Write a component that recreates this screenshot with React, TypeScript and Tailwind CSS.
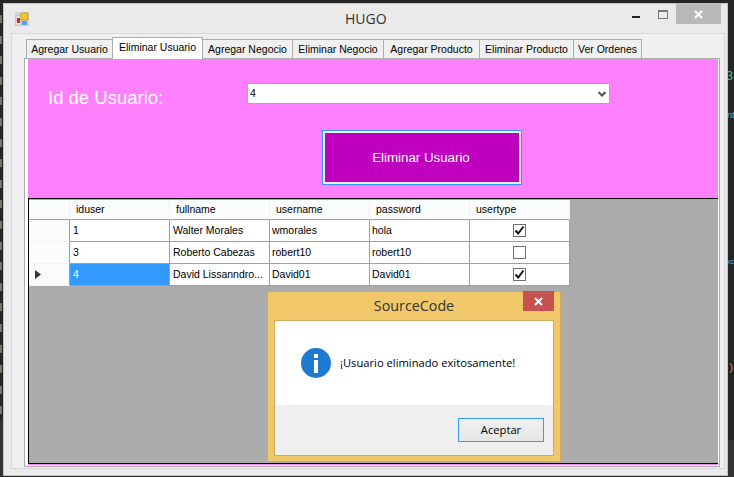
import clsx from "clsx";

const SEGOE = "font-['Open_Sans',sans-serif]";

const TABS = [
  { label: "Agregar Usuario", width: "w-[87px]" },
  { label: "Eliminar Usuario", width: "w-[91px]", active: true },
  { label: "Agregar Negocio", width: "w-[91px]" },
  { label: "Eliminar Negocio", width: "w-[92px]" },
  { label: "Agregar Producto", width: "w-[97px]" },
  { label: "Eliminar Producto", width: "w-[95px]" },
  { label: "Ver Ordenes", width: "w-[69px]" }
];

const COLUMNS = ["iduser", "fullname", "username", "password", "usertype"];

const ROWS = [
  { id: "1", name: "Walter Morales", user: "wmorales", pass: "hola", type: true },
  { id: "3", name: "Roberto Cabezas", user: "robert10", pass: "robert10", type: false },
  { id: "4", name: "David Lissanndro...", user: "David01", pass: "David01", type: true, current: true }
];

const EDITOR_MARKS = Array.from({ length: 20 }, (_, i) => i);

function AppIcon() {
  return (
    <svg width="14" height="14" viewBox="0 0 14 14" className="shrink-0">
      <rect x="0" y="0" width="14" height="14" fill="#d4d4d4" />
      <rect x="1" y="4" width="5" height="9" fill="#f2f2f2" stroke="#999" strokeWidth="0.5" />
      <rect x="2" y="6" width="3" height="5" fill="#c8281e" />
      <rect x="6" y="1" width="7" height="7" fill="#f7c81e" stroke="#a88a20" strokeWidth="0.7" />
      <rect x="7" y="9" width="5" height="4" fill="#5b9ee8" />
    </svg>
  );
}

function Checkbox({ checked }: { checked: boolean }) {
  return (
    <div className="flex h-[13px] w-[13px] items-center justify-center border border-[#707070] bg-white">
      {checked && (
        <svg width="11" height="11" viewBox="0 0 11 11">
          <path d="M1.5 5.5 L4.2 8.5 L9.5 1.5" fill="none" stroke="#111" strokeWidth="2" />
        </svg>
      )}
    </div>
  );
}

function DataGrid() {
  return (
    <div className="grid w-[541px] grid-cols-[41px_100px_100px_100px_100px_100px] bg-white text-[10.5px] text-black">
      <div className="h-[20px] border-r border-b border-r-[#f0f2f7] border-b-[#a0a0a0] bg-[#fafbfd]" />
      {COLUMNS.map((col) => (
        <div
          key={col}
          className="flex h-[20px] items-center border-r border-b border-r-[#f0f2f7] border-b-[#a0a0a0] bg-[#fafbfd] pl-[6px] leading-none"
        >
          {col}
        </div>
      ))}
      {ROWS.map((row) => (
        <div key={row.id} className="contents">
          <div className="flex h-[22px] items-center justify-end border-r border-b border-r-[#a0a0a0] border-b-[#f0f2f7] bg-[#fafbfd] pr-[28px]">
            {row.current && (
              <svg width="6" height="9" viewBox="0 0 6 9">
                <path d="M0 0 L6 4.5 L0 9 Z" fill="#333" />
              </svg>
            )}
          </div>
          <div
            className={clsx(
              "flex h-[22px] items-center border-r border-b border-[#a0a0a0] pl-[3px]",
              row.current && "bg-[#3399ff] text-white"
            )}
          >
            {row.id}
          </div>
          <div className="flex h-[22px] items-center overflow-hidden border-r border-b border-[#a0a0a0] pl-[3px] whitespace-nowrap">
            {row.name}
          </div>
          <div className="flex h-[22px] items-center border-r border-b border-[#a0a0a0] pl-[2px]">{row.user}</div>
          <div className="flex h-[22px] items-center border-r border-b border-[#a0a0a0] pl-[2px]">{row.pass}</div>
          <div className="flex h-[22px] items-center justify-center border-r border-b border-[#a0a0a0]">
            <Checkbox checked={row.type} />
          </div>
        </div>
      ))}
    </div>
  );
}

function MessageBox() {
  return (
    <div className="absolute top-[291px] left-[267px] flex h-[171px] w-[294px] flex-col border border-[#d2aa55] bg-[#f0c869] px-[6px] pb-[5px]">
      <div className="relative flex h-[28px] shrink-0 items-center justify-center">
        <span className={clsx(SEGOE, "text-[14.3px] text-[#333]")}>SourceCode</span>
        <div className="absolute top-[-1px] right-0 flex h-[20px] w-[31px] items-center justify-center bg-[#c75050]">
          <svg width="9" height="9" viewBox="0 0 9 9">
            <path d="M1 1 L8 8 M8 1 L1 8" stroke="#fff" strokeWidth="2" />
          </svg>
        </div>
      </div>
      <div className="flex flex-1 flex-col border border-[#d2aa55]">
        <div className="flex h-[84px] items-center bg-white pl-[26px]">
          <div className="flex h-[30px] w-[30px] shrink-0 flex-col items-center justify-center gap-[2px] rounded-full bg-[#1c7ad0]">
            <div className="h-[4px] w-[4px] bg-white" />
            <div className="h-[13px] w-[4px] bg-white" />
          </div>
          <span className={clsx(SEGOE, "ml-[9px] text-[11.2px] text-black")}>¡Usuario eliminado exitosamente!</span>
        </div>
        <div className="flex flex-1 items-start justify-end bg-[#efefef] pt-[13px] pr-[9px]">
          <div
            className={clsx(
              SEGOE,
              "flex h-[24px] w-[86px] items-center justify-center border border-[#3399ff] bg-gradient-to-b from-[#f0f0f0] to-[#e5e5e5] text-[11.2px] text-black"
            )}
          >
            Aceptar
          </div>
        </div>
      </div>
    </div>
  );
}

export default function App() {
  return (
    <div className="relative h-[477px] w-[734px] overflow-hidden bg-[#252526] pt-[3px] pl-[3px] font-['Liberation_Sans',sans-serif]">
      {/* editor text peeking out behind the window */}
      <div className="absolute top-[15px] left-0 flex flex-col gap-[12.6px]">
        {EDITOR_MARKS.map((i) => (
          <div key={i} className="h-[8px] w-[2px] bg-[#77776a]" />
        ))}
      </div>
      <div className="absolute top-[420px] left-0 h-[57px] w-[3px] bg-[#333333]" />
      <div className="absolute top-[440px] right-0 h-[37px] w-[7px] bg-[#333333]" />
      <span className="absolute top-[68px] left-[726px] font-['Liberation_Mono',monospace] text-[12px] text-[#3ac9a0]">3</span>
      <span className="absolute top-[109px] left-[727px] text-[9px] text-[#4ec9b0]">nt</span>
      <span className="absolute top-[256px] left-[726px] text-[8px] text-[#4fb8d8]">xc</span>
      <span className="absolute top-[361px] left-[728px] font-['Liberation_Mono',monospace] text-[10px] text-[#c98a4e]">)</span>

      <div className="relative flex h-[473px] w-[725px] flex-col border border-[#c4c4c4] bg-[#eaeaea]">
        {/* title bar */}
        <div className="relative flex h-[29px] shrink-0 items-center pl-[11px]">
          <AppIcon />
          <span className={clsx(SEGOE, "absolute top-[5px] left-[341px] text-[14px] leading-[20px] text-[#333]")}>HUGO</span>
          <div className="ml-auto flex items-start self-start">
            <div className="mt-[12px] mr-[18px] h-[2px] w-[8px] bg-[#222]" />
            <div className="mt-[6px] mr-[8px] h-[9px] w-[10px] border border-t-2 border-[#777]" />
            <div className="mr-[6px] flex h-[20px] w-[45px] items-center justify-center bg-[#b9b9b9]">
              <svg width="9" height="9" viewBox="0 0 9 9">
                <path d="M1 1 L8 8 M8 1 L1 8" stroke="#fff" strokeWidth="2" />
              </svg>
            </div>
          </div>
        </div>

        {/* client area */}
        <div className="ml-[7px] flex h-[436px] w-[714px] flex-col border border-[#d8d8d8] bg-[#f0f0f0] pt-[2px] pl-[12px]">
          <div className="flex h-[22px] shrink-0 items-end pl-[2px] text-[10.5px] text-black">
            {TABS.map((tab, i) => (
              <div
                key={tab.label}
                className={clsx(
                  "flex items-center justify-center border border-b-0 border-[#acacac] leading-none whitespace-nowrap",
                  tab.width,
                  i > 0 && "-ml-px",
                  tab.active ? "relative z-10 mb-[-1px] h-[22px] bg-white pb-[2px]" : "h-[19px] bg-[#f0f0f0]"
                )}
              >
                {tab.label}
              </div>
            ))}
          </div>
          <div className="h-[409px] w-[696px] border border-[#acacac] bg-white pr-[1px] pb-[1px] pl-[3px]">
            <div className="flex h-full flex-col bg-[#ff80ff] pb-[1px]">
              <div className="h-[139px] shrink-0">
                <div className="flex items-start pt-[24px]">
                  <span className="mt-[5px] ml-[20px] w-[199px] text-[18.5px] leading-[19px] text-white">Id de Usuario:</span>
                  <div className="flex h-[21px] w-[363px] items-center justify-between border border-[#a9a9a9] bg-white pr-[3px] pl-[2px] text-[10.5px] text-black">
                    4
                    <svg width="8" height="6" viewBox="0 0 8 6">
                      <path d="M0.5 1 L4 4.5 L7.5 1" fill="none" stroke="#555" strokeWidth="2" />
                    </svg>
                  </div>
                </div>
                <div className="mt-[23px] ml-[294px] h-[55px] w-[200px] border border-[#3399ff]">
                  <div className="flex h-full items-center justify-center border-2 border-[#eeeeee] bg-[#bf00bf] pr-[2px] text-[13.3px] text-white">
                    Eliminar Usuario
                  </div>
                </div>
              </div>
              <div className="flex-1 border border-r-0 border-black bg-[#ababab] pt-px">
                <DataGrid />
              </div>
            </div>
          </div>
        </div>
      </div>

      <MessageBox />
    </div>
  );
}
